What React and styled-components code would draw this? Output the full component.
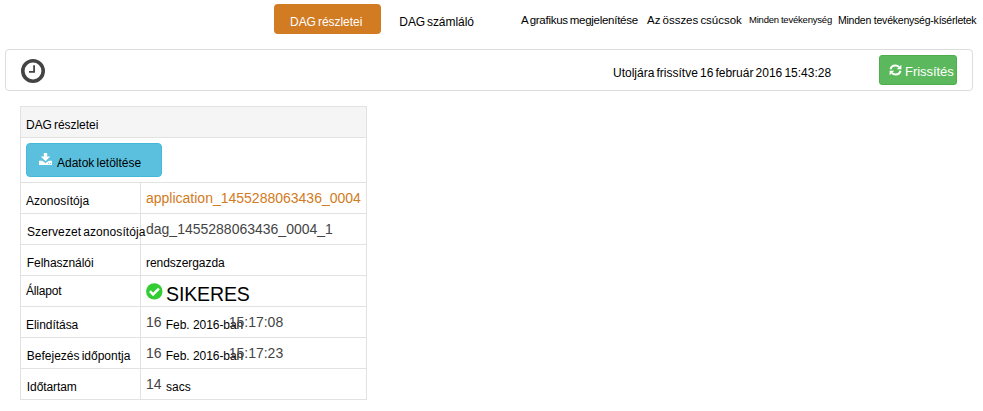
import React from 'react';
import styled, { createGlobalStyle } from 'styled-components';

const GlobalStyle = createGlobalStyle`
  * { box-sizing: border-box; }
  body { margin: 0; background: #fff; overflow: hidden; }
`;

const Page = styled.div`
  width: 983px;
  height: 411px;
  font-family: "Liberation Sans", Arial, sans-serif;
  color: #000;
`;

const Text = styled.span`
  display: block;
  flex: none;
  width: ${p => (p.$w ? `${p.$w}px` : 'auto')};
  margin-top: ${p => p.$mt || 0}px;
  margin-left: ${p => p.$ml || 0}px;
  font-size: ${p => p.$size || 12}px;
  line-height: 16px;
  letter-spacing: ${p => p.$ls || 0}px;
  word-spacing: ${p => p.$ws || 0}px;
  color: ${p => p.$color || '#000'};
  white-space: nowrap;
`;

const Nav = styled.nav`
  display: flex;
  align-items: flex-start;
  height: 49px;
  padding: 4px 0 0 274px;
`;

const ActiveTab = styled.div`
  display: flex;
  flex: none;
  width: 107px;
  height: 30px;
  padding: 10px 0 0 16px;
  border-radius: 4px;
  background: #d17b22;
`;

const StatusBar = styled.header`
  display: flex;
  align-items: flex-start;
  width: 968px;
  height: 42px;
  margin-left: 5px;
  padding-left: 15px;
  border: 1px solid #ddd;
  border-radius: 4px;
`;

const ClockIcon = styled.svg`
  flex: none;
  width: 24px;
  height: 24px;
  margin-top: 9px;
`;

const Button = styled.button`
  display: flex;
  flex: none;
  align-items: flex-start;
  margin: 0;
  padding: 0;
  border: 1px solid;
  border-radius: 4px;
  font-family: inherit;
  text-align: left;
`;

const RefreshButton = styled(Button)`
  width: 78px;
  height: 30px;
  margin: 5px 0 0 48px;
  padding-left: 9px;
  border-color: #4cae4c;
  border-radius: 3px;
  background: #5cb85c;
`;

const DownloadButton = styled(Button)`
  width: 136px;
  height: 34px;
  padding-left: 12px;
  border-color: #46b8da;
  background: #5bc0de;
`;

const ButtonIcon = styled.svg`
  flex: none;
  width: 13px;
  height: 12px;
  margin-top: ${p => p.$mt}px;
`;

const Table = styled.section`
  width: 347px;
  margin: 15px 0 0 20px;
  border: 1px solid #e2e2e2;
`;

const TableHeader = styled.div`
  height: 31px;
  padding: 10px 0 0 5px;
  border-bottom: 1px solid #e2e2e2;
  background: #f5f5f5;
`;

const ActionRow = styled.div`
  height: 45px;
  padding: 5px;
  border-bottom: 1px solid #e2e2e2;
`;

const Row = styled.div`
  display: grid;
  grid-template-columns: 120px 1fr;
  height: 31px;
  border-bottom: 1px solid #e2e2e2;
  &:last-child { height: 30px; border-bottom: 0; }
`;

const LabelCell = styled.div`
  display: flex;
  align-items: flex-start;
  border-right: 1px solid #e2e2e2;
  padding-left: 5px;
`;

const ValueCell = styled.div`
  display: flex;
  align-items: flex-start;
  padding-left: 5px;
`;

const OkIcon = styled.svg`
  flex: none;
  width: 17px;
  height: 17px;
  margin-top: 7px;
`;

const GREY = '#444';

const Field = ({ label, mt = 10, ml, ls, ws, children }) => (
  <Row>
    <LabelCell><Text $w={114} $mt={mt} $ml={ml} $ls={ls} $ws={ws}>{label}</Text></LabelCell>
    <ValueCell>{children}</ValueCell>
  </Row>
);

const DateValue = ({ time }) => (
  <>
    <Text $size={14} $mt={7} $w={19.5} $color={GREY}>16</Text>
    <Text $mt={10} $w={62.9} $ml={0.3} $ls={-0.05}>Feb. 2016-ban</Text>
    <Text $size={14} $mt={7} $color={GREY}>{time}</Text>
  </>
);

export default function App() {
  return (
    <Page>
      <GlobalStyle />
      <Nav>
        <ActiveTab><Text $ws={-1.2} $ls={-0.04} $color="#fff">DAG részletei</Text></ActiveTab>
        <Text $w={121.7} $mt={10} $ml={18.3} $ws={-1.4} $ls={-0.06}>DAG számláló</Text>
        <Text $w={126} $mt={8} $size={11.5} $ws={-1} $ls={-0.27}>A grafikus megjelenítése</Text>
        <Text $w={102} $mt={8} $size={11.5} $ws={-1} $ls={-0.02}>Az összes csúcsok</Text>
        <Text $w={89} $mt={8} $size={9.5} $ws={-0.5} $ls={-0.2}>Minden tevékenység</Text>
        <Text $mt={8} $size={10.5} $ls={-0.22}>Minden tevékenység-kísérletek</Text>
      </Nav>
      <StatusBar>
        <ClockIcon viewBox="0 0 24 24">
          <circle cx="12" cy="12" r="10.2" fill="none" stroke="#444" strokeWidth="3.6" />
          <path d="M13.1 6.3v6.6H8" fill="none" stroke="#444" strokeWidth="1.8" />
        </ClockIcon>
        <Text $w={218} $mt={15} $ml={568} $ws={-1.2}>Utoljára frissítve 16 február 2016 15:43:28</Text>
        <RefreshButton>
          <ButtonIcon $mt={8} viewBox="0 0 13 12">
            <path d="M1.6 5.2C2 3 4 1.5 6.4 1.5c1.6 0 2.8.6 3.8 1.7M11.4 6.8c-.4 2.2-2.4 3.7-4.8 3.7-1.6 0-2.8-.6-3.8-1.7" fill="none" stroke="#fff" strokeWidth="2" />
            <path d="M12.4.7v4.6H7.8zM.6 11.3V6.7h4.6z" fill="#fff" />
          </ButtonIcon>
          <Text $size={13} $mt={8} $ml={3} $ls={-0.05} $color="#fff">Frissítés</Text>
        </RefreshButton>
      </StatusBar>
      <Table>
        <TableHeader><Text $ws={-1.2} $ls={-0.04}>DAG részletei</Text></TableHeader>
        <ActionRow>
          <DownloadButton>
            <ButtonIcon $mt={9} viewBox="0 0 13 12">
              <path d="M4.8 0h3.4v3.6h3L6.5 8.2 1.8 3.6h3zM0 7.8h3.1l3.4 2.2 3.4-2.2H13V12H0z" fill="#fff" />
              <path d="M9 10.4h1M11 10.4h1" stroke="#5bc0de" strokeWidth=".8" />
            </ButtonIcon>
            <Text $mt={11} $ml={5} $ws={-1.2}>Adatok letöltése</Text>
          </DownloadButton>
        </ActionRow>
        <Field label="Azonosítója" ls={0.05}>
          <Text $size={14} $mt={7} $color="#d17b22">application_1455288063436_0004</Text>
        </Field>
        <Field label="Szervezet azonosítója" ml={1} ls={0.09} ws={-1.4}>
          <Text $size={14} $mt={7} $color={GREY}>dag_1455288063436_0004_1</Text>
        </Field>
        <Field label="Felhasználói" ml={0.8} ls={-0.05}>
          <Text $mt={10} $ls={-0.06}>rendszergazda</Text>
        </Field>
        <Field label="Állapot" mt={7} ls={-0.2}>
          <OkIcon viewBox="0 0 17 17">
            <circle cx="8.3" cy="8.4" r="8.2" fill="#3c3" />
            <path d="M3.9 8.2l3.2 3.2 5.8-5.8" fill="none" stroke="#fff" strokeWidth="2.5" />
          </OkIcon>
          <Text $size={19.5} $mt={10} $ml={3} $ls={-0.12}>SIKERES</Text>
        </Field>
        <Field label="Elindítása" ls={-0.05}><DateValue time="15:17:08" /></Field>
        <Field label="Befejezés időpontja" ml={0.8} ws={-1.2}><DateValue time="15:17:23" /></Field>
        <Field label="Időtartam" ml={0.8} ls={-0.08}>
          <Text $size={14} $mt={7} $w={20} $color={GREY}>14</Text>
          <Text $mt={10}>sacs</Text>
        </Field>
      </Table>
    </Page>
  );
}
